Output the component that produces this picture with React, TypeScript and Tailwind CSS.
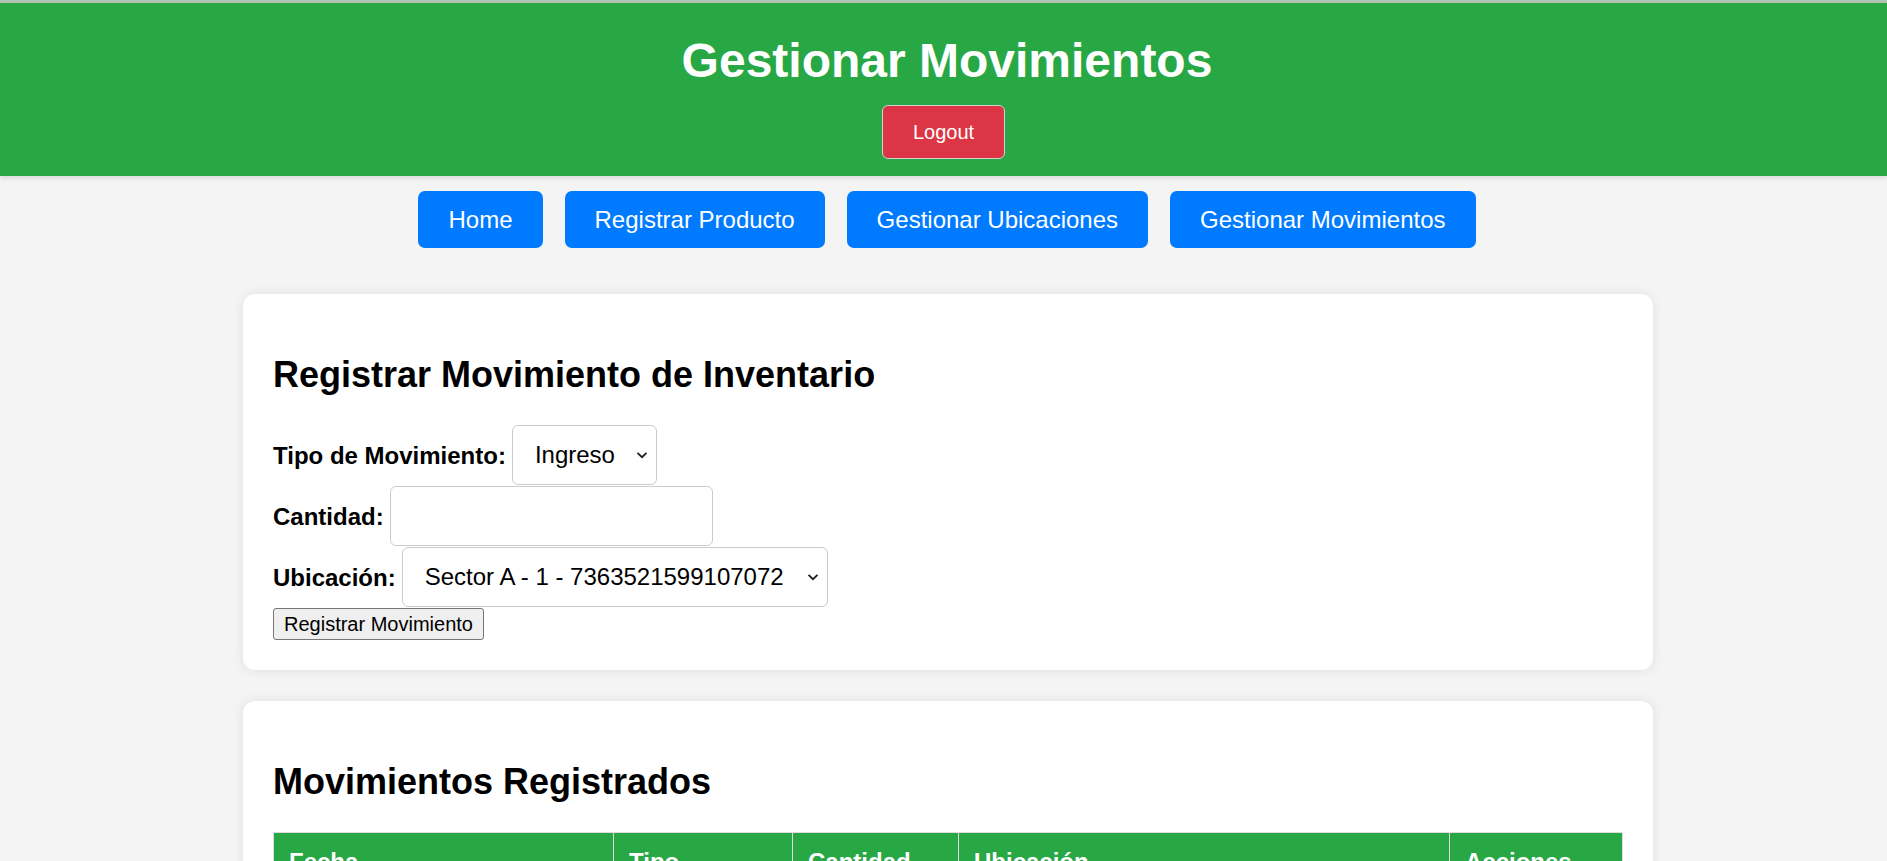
import { useState } from "react";

const navLinks = ["Home", "Registrar Producto", "Gestionar Ubicaciones", "Gestionar Movimientos"];

const movimientos = [
  { fecha: "2024-05-12 10:24", tipo: "Ingreso", cantidad: 25, ubicacion: "Sector A - 1 - 7363521599107072" },
  { fecha: "2024-05-13 16:02", tipo: "Egreso", cantidad: 4, ubicacion: "Sector A - 1 - 7363521599107072" },
];

function Chevron() {
  return (
    <svg
      className="pointer-events-none absolute right-[9px] top-1/2 -translate-y-1/2"
      width="12"
      height="8"
      viewBox="0 0 12 8"
      fill="none"
    >
      <path d="M1.5 1.8 6 6.2l4.5-4.4" stroke="#1f1f1f" strokeWidth="1.8" />
    </svg>
  );
}

export default function App() {
  const [tipo, setTipo] = useState("Ingreso");
  const [cantidad, setCantidad] = useState("");
  const [ubicacion, setUbicacion] = useState("1");

  return (
    <div className="min-h-screen bg-[#f4f4f4] font-['Liberation_Sans',Arial,sans-serif] text-black">
      {/* header */}
      <header className="flex flex-col items-center border-t-[3px] border-[#b1c4b2] bg-[#28a745] pt-[30px] pb-[17px] shadow-[0_2px_5px_rgba(0,0,0,0.12)]">
        <h1 className="mb-[17px] pl-[7px] text-[48px] font-bold leading-[55px] text-white">Gestionar Movimientos</h1>
        <button className="rounded-[6px] border border-[#d2d2d2] bg-[#dc3545] px-[30px] py-[15px] text-[20px] leading-[22px] text-white">
          Logout
        </button>
      </header>

      {/* nav */}
      <nav className="mt-[15px] flex justify-center gap-[22px] pl-[7px]">
        {navLinks.map((link) => (
          <a
            key={link}
            href="#"
            className="rounded-[7px] bg-[#007bff] px-[30px] py-[15px] text-[24px] leading-[27px] text-white"
          >
            {link}
          </a>
        ))}
      </nav>

      <main className="flex flex-col items-center pl-[9px] pb-[40px]">
        {/* formulario */}
        <section className="mt-[46px] w-[1410px] rounded-[12px] bg-white p-[30px] shadow-[0_0_12px_rgba(0,0,0,0.09)]">
          <h2 className="my-[30px] text-[36px] font-bold leading-[41px]">Registrar Movimiento de Inventario</h2>
          <form className="flex flex-col items-start" onSubmit={(e) => e.preventDefault()}>
            <div className="mb-[1px] flex items-center gap-[6px]">
              <label className="text-[24px] font-bold leading-[27px]">Tipo de Movimiento:</label>
              <div className="relative">
                <select
                  value={tipo}
                  onChange={(e) => setTipo(e.target.value)}
                  className="h-[60px] w-[145px] appearance-none rounded-[6px] border border-[#cccccc] bg-white pl-[22px] text-[24px] outline-none"
                >
                  <option>Ingreso</option>
                  <option>Egreso</option>
                </select>
                <Chevron />
              </div>
            </div>

            <div className="mb-[1px] flex items-center gap-[6px]">
              <label className="text-[24px] font-bold leading-[27px]">Cantidad:</label>
              <input
                type="number"
                value={cantidad}
                onChange={(e) => setCantidad(e.target.value)}
                className="h-[60px] w-[323px] rounded-[6px] border border-[#cccccc] bg-white px-[15px] text-[24px] outline-none"
              />
            </div>

            <div className="mb-[1px] flex items-center gap-[6px]">
              <label className="text-[24px] font-bold leading-[27px]">Ubicación:</label>
              <div className="relative">
                <select
                  value={ubicacion}
                  onChange={(e) => setUbicacion(e.target.value)}
                  className="h-[60px] w-[426px] appearance-none rounded-[6px] border border-[#cccccc] bg-white pl-[22px] text-[24px] outline-none"
                >
                  <option value="1">Sector A - 1 - 7363521599107072</option>
                  <option value="2">Sector B - 2 - 7363521599107073</option>
                </select>
                <Chevron />
              </div>
            </div>

            <button
              type="submit"
              className="h-[32px] rounded-[3px] border border-[#767676] bg-[#efefef] px-[10px] text-[20px] leading-[23px]"
            >
              Registrar Movimiento
            </button>
          </form>
        </section>

        {/* tabla */}
        <section className="mt-[31px] w-[1410px] rounded-[12px] bg-white p-[30px] shadow-[0_0_12px_rgba(0,0,0,0.09)]">
          <h2 className="my-[30px] text-[36px] font-bold leading-[41px]">Movimientos Registrados</h2>
          <table className="w-full border-collapse text-left text-[24px]">
            <thead>
              <tr className="bg-[#28a745] text-white">
                <th className="w-[340px] border border-[#dddddd] p-[15px] font-bold leading-[27px]">Fecha</th>
                <th className="w-[179px] border border-[#dddddd] p-[15px] font-bold leading-[27px]">Tipo</th>
                <th className="w-[166px] border border-[#dddddd] p-[15px] font-bold leading-[27px]">Cantidad</th>
                <th className="w-[491px] border border-[#dddddd] p-[15px] font-bold leading-[27px]">Ubicación</th>
                <th className="border border-[#dddddd] p-[15px] font-bold leading-[27px]">Acciones</th>
              </tr>
            </thead>
            <tbody>
              {movimientos.map((m) => (
                <tr key={m.fecha}>
                  <td className="border border-[#dddddd] p-[15px]">{m.fecha}</td>
                  <td className="border border-[#dddddd] p-[15px]">{m.tipo}</td>
                  <td className="border border-[#dddddd] p-[15px]">{m.cantidad}</td>
                  <td className="border border-[#dddddd] p-[15px]">{m.ubicacion}</td>
                  <td className="border border-[#dddddd] p-[15px]">
                    <button className="rounded-[6px] bg-[#dc3545] px-[15px] py-[6px] text-[20px] text-white">Eliminar</button>
                  </td>
                </tr>
              ))}
            </tbody>
          </table>
        </section>
      </main>
    </div>
  );
}
